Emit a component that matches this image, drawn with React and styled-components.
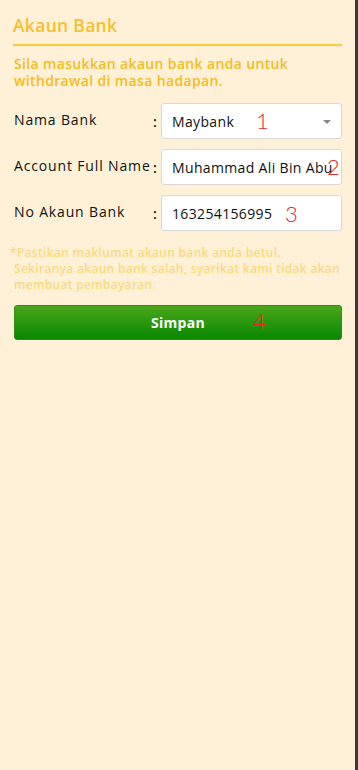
import React from 'react'
import styled, { createGlobalStyle } from 'styled-components'

const GlobalStyle = createGlobalStyle`
  html, body {
    margin: 0;
    padding: 0;
    background: #fef1d8;
  }
  * {
    box-sizing: border-box;
  }
`

const Page = styled.div`
  min-height: 100vh;
  background: #fef1d8;
  border-right: 3px solid #3a3a3a;
  padding: 0 13px 0 14px;
  font-family: 'Open Sans', 'Noto Sans', sans-serif;
`

const Title = styled.div`
  padding-top: 13px;
  padding-bottom: 7px;
  font-size: 17.5px;
  font-weight: 600;
  letter-spacing: 0.3px;
  color: #f9be2a;
  border-bottom: 2px solid #fcca3f;
  margin-left: -1px;
`

const Subtitle = styled.div`
  margin-top: 9px;
  font-size: 14px;
  font-weight: 600;
  line-height: 17px;
  letter-spacing: 0.35px;
  color: #f7bb20;
`

const Form = styled.div`
  margin-top: 14px;
  display: flex;
  flex-direction: column;
  gap: 10px;
`

const Row = styled.div`
  display: grid;
  grid-template-columns: 136px 10px 1fr;
  align-items: center;
`

const Label = styled.div`
  font-size: 14px;
  font-weight: 500;
  color: #111;
  letter-spacing: 0.85px;
  white-space: nowrap;
  padding-bottom: 3px;
`

const Colon = styled.div`
  font-size: 14px;
  font-weight: 600;
  color: #111;
  text-align: center;
`

const Field = styled.div`
  position: relative;
  height: 36px;
  margin-left: 1px;
  background: #fff;
  border: 1px solid #d9d9d9;
  border-radius: 3px;
  display: flex;
  align-items: center;
  padding: 0 10px;
  font-size: 14px;
  font-weight: 500;
  letter-spacing: 0.35px;
  color: #111;
  white-space: nowrap;
  overflow: hidden;
`

const Caret = styled.span`
  position: absolute;
  right: 10px;
  top: 16px;
  width: 0;
  height: 0;
  border-left: 4px solid transparent;
  border-right: 4px solid transparent;
  border-top: 4px solid #888;
`

const Mark = styled.span`
  position: absolute;
  left: ${p => p.$x}px;
  top: ${p => p.$y}px;
  font-family: Lato, 'Liberation Sans', sans-serif;
  font-weight: 300;
  font-size: 22px;
  line-height: 1;
  color: #e3262a;
  pointer-events: none;
`

const Note = styled.div`
  margin-top: 14px;
  margin-left: -4px;
  font-size: 12px;
  font-weight: 600;
  line-height: 16px;
  letter-spacing: 0.3px;
  color: #fbd97c;
  p {
    margin: 0;
  }
  p + p {
    padding-left: 4px;
  }
`

const Button = styled.button`
  position: relative;
  display: block;
  width: 100%;
  height: 35px;
  margin-top: 12px;
  border: 1px solid #2f8d13;
  border-radius: 3px;
  background: linear-gradient(#4aa71c, #098800);
  color: #fff;
  font-family: 'Open Sans', 'Noto Sans', sans-serif;
  font-size: 14px;
  font-weight: 700;
  letter-spacing: 0.3px;
  cursor: pointer;
`

export default function App() {
  return (
    <Page>
      <GlobalStyle />
      <Title>Akaun Bank</Title>
      <Subtitle>
        Sila masukkan akaun bank anda untuk
        <br />
        withdrawal di masa hadapan.
      </Subtitle>
      <Form>
        <Row>
          <Label>Nama Bank</Label>
          <Colon>:</Colon>
          <Field>
            Maybank
            <Caret />
            <Mark $x={94} $y={6}>1</Mark>
          </Field>
        </Row>
        <Row>
          <Label>Account Full Name</Label>
          <Colon>:</Colon>
          <Field>
            Muhammad Ali Bin Abu
            <Mark $x={165} $y={6}>2</Mark>
          </Field>
        </Row>
        <Row>
          <Label>No Akaun Bank</Label>
          <Colon>:</Colon>
          <Field>
            163254156995
            <Mark $x={123} $y={7}>3</Mark>
          </Field>
        </Row>
      </Form>
      <Note>
        <p>*Pastikan maklumat akaun bank anda betul.</p>
        <p>Sekiranya akaun bank salah, syarikat kami tidak akan</p>
        <p>membuat pembayaran.</p>
      </Note>
      <Button>
        Simpan
        <Mark $x={238} $y={4}>4</Mark>
      </Button>
    </Page>
  )
}
